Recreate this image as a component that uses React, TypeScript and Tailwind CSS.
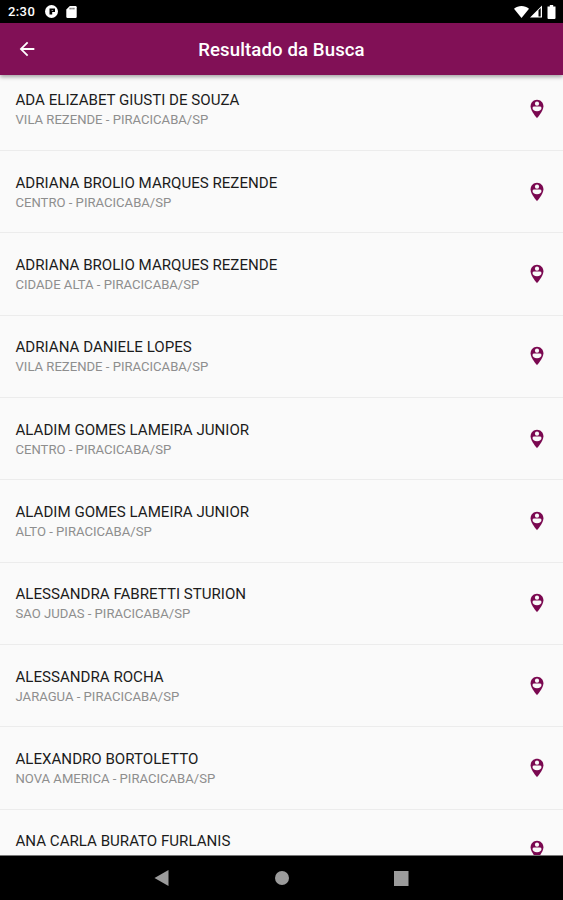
type Result = {
  name: string
  place: string
}

const results: Result[] = [
  { name: "ADA ELIZABET GIUSTI DE SOUZA", place: "VILA REZENDE - PIRACICABA/SP" },
  { name: "ADRIANA BROLIO MARQUES REZENDE", place: "CENTRO - PIRACICABA/SP" },
  { name: "ADRIANA BROLIO MARQUES REZENDE", place: "CIDADE ALTA - PIRACICABA/SP" },
  { name: "ADRIANA DANIELE LOPES", place: "VILA REZENDE - PIRACICABA/SP" },
  { name: "ALADIM GOMES LAMEIRA JUNIOR", place: "CENTRO - PIRACICABA/SP" },
  { name: "ALADIM GOMES LAMEIRA JUNIOR", place: "ALTO - PIRACICABA/SP" },
  { name: "ALESSANDRA FABRETTI STURION", place: "SAO JUDAS - PIRACICABA/SP" },
  { name: "ALESSANDRA ROCHA", place: "JARAGUA - PIRACICABA/SP" },
  { name: "ALEXANDRO BORTOLETTO", place: "NOVA AMERICA - PIRACICABA/SP" },
  { name: "ANA CARLA BURATO FURLANIS", place: "" },
]

function StatusBar() {
  return (
    <div className="flex h-[23px] shrink-0 items-center bg-black pl-2 pr-[7px] text-white">
      <span className="text-[13px] font-medium leading-none tracking-[0.4px]">2:30</span>
      <svg className="ml-[10px] h-[13px] w-[13px]" viewBox="0 0 13 13">
        <circle cx="6.5" cy="6.5" r="6.5" fill="#fff" />
        <path d="M4.500 3.500H10V7H7.200V9.500H4.500z" fill="#000" />
        <path d="M6.600 5h1.500v.800H6.600z" fill="#bbb" />
      </svg>
      <svg className="ml-[8px] h-[12px] w-[11px]" viewBox="0 0 11 12" fill="#fff">
        <path d="M3.800 0H9.500A1.200 1.200 0 0 1 10.700 1.200V10.800A1.200 1.200 0 0 1 9.500 12H1.500A1.200 1.200 0 0 1 .3 10.800V3.500z" />
        <path d="M4.100 1.800v1.600M6 1.800v1.600M7.900 1.800v1.600" stroke="#000" strokeWidth=".8" />
      </svg>

      <div className="ml-auto flex items-center">
        <svg className="h-[12px] w-[15px]" viewBox="0 0 15 12" fill="#fff">
          <path d="M0 2.700C4.400-.9 10.600-.9 15 2.700L7.500 12z" />
        </svg>
        <svg className="ml-[1px] h-[13px] w-[12px]" viewBox="0 0 12 13" fill="#fff">
          <path fillRule="evenodd" d="M12 .5V12.500H0zM8.500 5.200V11.500H10.700V3z" />
        </svg>
        <svg className="ml-[5px] h-[14px] w-[9px]" viewBox="0 0 9 14" fill="#fff">
          <path d="M2.800 0h3.400v1.500H8.500V13a1 1 0 0 1-1 1h-6a1 1 0 0 1-1-1V1.500h2.300z" />
        </svg>
      </div>
    </div>
  )
}

function AppBar() {
  return (
    <header className="relative z-10 grid h-[52px] shrink-0 grid-cols-[53px_1fr_53px] items-center bg-[#811056] text-white shadow-[0_2px_4px_rgba(0,0,0,0.35)]">
      <button className="flex justify-center" aria-label="Voltar">
        <svg className="h-[22px] w-[22px]" viewBox="0 0 24 24" fill="currentColor">
          <path d="M20 11H7.830l5.590-5.590L12 4l-8 8 8 8 1.410-1.410L7.830 13H20v-2z" />
        </svg>
      </button>
      <h1 className="pt-[2px] text-center text-[18.600px] font-medium leading-none tracking-[0.1px]">Resultado da Busca</h1>
    </header>
  )
}

function PersonPin() {
  return (
    <svg className="h-[22px] w-[22px] shrink-0" viewBox="0 0 24 24">
      <path
        fill="#7a0850"
        d="M12 2C8.140 2 5 5.140 5 9c0 5.250 7 13 7 13s7-7.750 7-13c0-3.860-3.140-7-7-7z"
      />
      <circle cx="12" cy="6.200" r="2.300" fill="#fafafa" />
      <path fill="#fafafa" d="M9 9.400h6q1.900 0 1.900 1.600c0 2.200-1.900 3.500-4.900 3.500s-4.900-1.300-4.900-3.500q0-1.600 1.900-1.600z" />
    </svg>
  )
}

function ResultRow({ name, place }: Result) {
  return (
    <li className="flex h-[82.350px] shrink-0 items-center justify-between border-b border-[#ececec] pl-[15.500px] pr-[15.500px]">
      <div className="pt-[2px]">
        <p className="text-[15.100px] leading-[19px] text-[#1c1c1c]">{name}</p>
        <p className="h-[19px] text-[13.100px] leading-[19px] text-[#8e8e8e]">{place}</p>
      </div>
      <PersonPin />
    </li>
  )
}

function NavBar() {
  return (
    <nav className="flex h-[44px] shrink-0 items-center justify-center gap-[97px] bg-black">
      <svg className="h-4 w-[22px]" viewBox="0 0 22 16" fill="#9b9b9b">
        <path d="M16.500 0v16L2.500 8z" />
      </svg>
      <svg className="h-[14px] w-[22px]" viewBox="0 0 22 14" fill="#9b9b9b">
        <circle cx="11" cy="7" r="7" />
      </svg>
      <svg className="h-[15px] w-[22px]" viewBox="0 0 22 15" fill="#9b9b9b">
        <rect x="4" width="14.500" height="15" />
      </svg>
    </nav>
  )
}

export default function App() {
  return (
    <div className="flex h-[900px] w-[563px] flex-col overflow-hidden bg-[#fafafa] font-[Roboto,sans-serif]">
      <StatusBar />
      <AppBar />
      {/* the list is scrolled slightly under the app bar */}
      <main className="min-h-0 flex-1 overflow-hidden border-b border-[#777]">
        <ul className="-mt-[6.400px] flex flex-col">
          {results.map((result, i) => (
            <ResultRow key={i} {...result} />
          ))}
        </ul>
      </main>
      <NavBar />
    </div>
  )
}
